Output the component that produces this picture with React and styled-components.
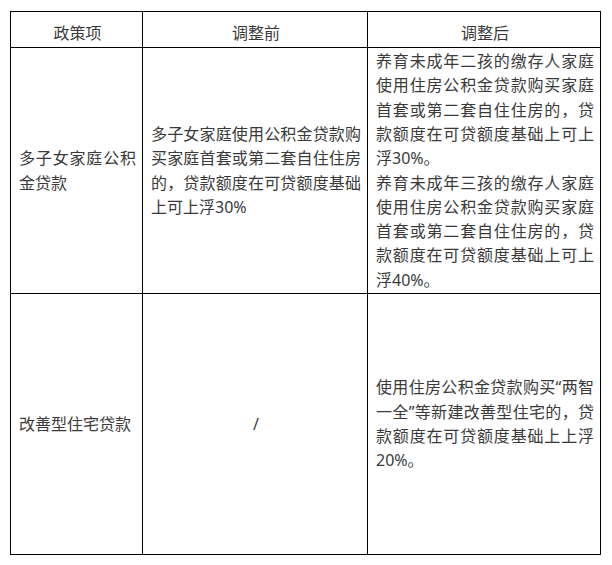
import React from 'react';
import styled, { createGlobalStyle } from 'styled-components';

const GlobalStyle = createGlobalStyle`
  body {
    margin: 0;
    background: #fff;
  }
`;

const Page = styled.div`
  padding: 11px 0 0 10px;
  font-family: "Noto Sans", "Noto Sans CJK SC", sans-serif;
  font-size: 16px;
  color: #3a3a3a;
`;

const Table = styled.table`
  width: 590px;
  border-collapse: collapse;
  table-layout: fixed;
`;

const Row = styled.tr`
  height: ${(p) => p.$height}px;
`;

const HeadCell = styled.th`
  border: 1px solid #000;
  padding: 9px 6px 1px 8px;
  font-weight: normal;
  line-height: 24.3px;
  text-align: center;
  vertical-align: middle;
`;

const Cell = styled.td`
  border: 1px solid #000;
  padding: 1px 6px 1px 8px;
  line-height: 24.3px;
  text-align: ${(p) => (p.$center ? 'center' : 'justify')};
  vertical-align: middle;
`;

const Para = styled.div`
  text-align: justify;
`;

const rows = [
  {
    height: 246,
    item: '多子女家庭公积金贷款',
    before: '多子女家庭使用公积金贷款购买家庭首套或第二套自住住房的，贷款额度在可贷额度基础上可上浮30%',
    after: [
      '养育未成年二孩的缴存人家庭使用住房公积金贷款购买家庭首套或第二套自住住房的，贷款额度在可贷额度基础上可上浮30%。',
      '养育未成年三孩的缴存人家庭使用住房公积金贷款购买家庭首套或第二套自住住房的，贷款额度在可贷额度基础上可上浮40%。',
    ],
  },
  {
    height: 261,
    item: '改善型住宅贷款',
    before: '/',
    center: true,
    after: ['使用住房公积金贷款购买“两智一全”等新建改善型住宅的，贷款额度在可贷额度基础上上浮20%。'],
  },
];

const App = () => {
  return (
    <Page>
      <GlobalStyle />
      <Table>
        <colgroup>
          <col style={{ width: 132 }} />
          <col style={{ width: 225 }} />
          <col style={{ width: 233 }} />
        </colgroup>
        <thead>
          <Row $height={36}>
            <HeadCell>政策项</HeadCell>
            <HeadCell>调整前</HeadCell>
            <HeadCell>调整后</HeadCell>
          </Row>
        </thead>
        <tbody>
          {rows.map((r) => (
            <Row key={r.item} $height={r.height}>
              <Cell>{r.item}</Cell>
              <Cell $center={r.center}>{r.before}</Cell>
              <Cell>
                {r.after.map((t) => (
                  <Para key={t}>{t}</Para>
                ))}
              </Cell>
            </Row>
          ))}
        </tbody>
      </Table>
    </Page>
  );
};

export default App;
